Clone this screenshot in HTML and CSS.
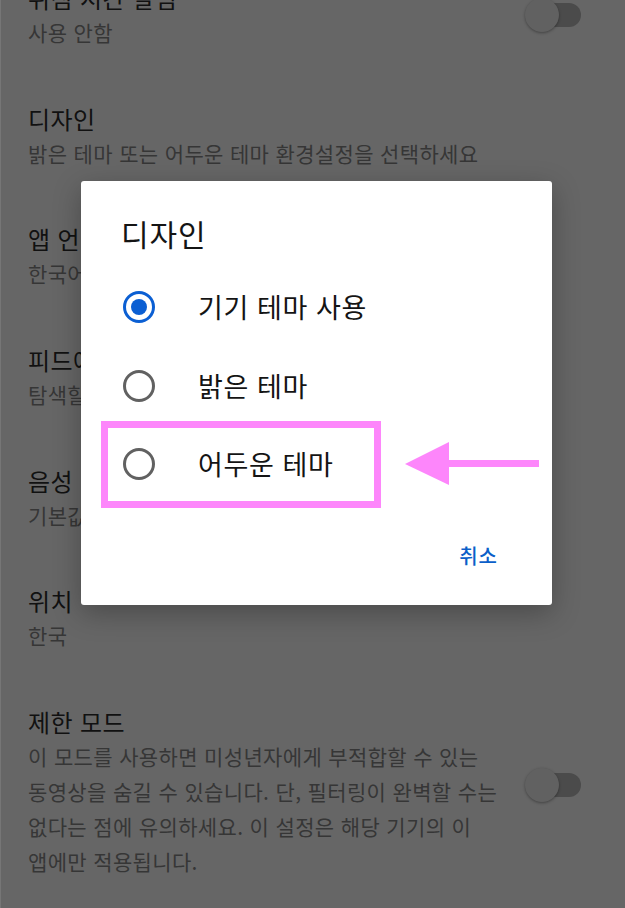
FILE: index.html
```html
<!DOCTYPE html>
<html lang="ko">
<head>
<meta charset="utf-8">
<title>설정</title>
<link rel="stylesheet" href="styles.css">
</head>
<body>
<main class="settings">
  <div class="row">
    <div class="row-text">
      <div class="row-title">취침 시간 알림</div>
      <div class="row-sub">사용 안함</div>
    </div>
    <div class="switch"></div>
  </div>
  <div class="row">
    <div class="row-text">
      <div class="row-title">디자인</div>
      <div class="row-sub">밝은 테마 또는 어두운 테마 환경설정을 선택하세요</div>
    </div>
  </div>
  <div class="row">
    <div class="row-text">
      <div class="row-title">앱 언어</div>
      <div class="row-sub">한국어</div>
    </div>
  </div>
  <div class="row">
    <div class="row-text">
      <div class="row-title">피드에서 재생</div>
      <div class="row-sub">탐색할 때 재생</div>
    </div>
  </div>
  <div class="row">
    <div class="row-text">
      <div class="row-title">음성 검색</div>
      <div class="row-sub">기본값</div>
    </div>
  </div>
  <div class="row">
    <div class="row-text">
      <div class="row-title">위치</div>
      <div class="row-sub">한국</div>
    </div>
  </div>
  <div class="row row-long">
    <div class="row-text">
      <div class="row-title">제한 모드</div>
      <div class="row-sub">이 모드를 사용하면 미성년자에게 부적합할 수 있는 동영상을 숨길 수 있습니다. 단, 필터링이 완벽할 수는 없다는 점에 유의하세요. 이 설정은 해당 기기의 이 앱에만 적용됩니다.</div>
    </div>
    <div class="switch switch-raised"></div>
  </div>
</main>

<div class="dialog" role="dialog" aria-labelledby="dlg-title">
  <h2 class="dialog-title" id="dlg-title">디자인</h2>
  <div class="options">
    <div class="option">
      <span class="radio radio-on"></span>
      <span class="option-label">기기 테마 사용</span>
    </div>
    <div class="option">
      <span class="radio"></span>
      <span class="option-label">밝은 테마</span>
    </div>
    <div class="option">
      <span class="radio"></span>
      <span class="option-label">어두운 테마</span>
    </div>
  </div>
  <div class="actions">
    <span class="btn-text">취소</span>
  </div>
</div>

<div class="mark-box"></div>
<svg class="mark-arrow" width="140" height="50" viewBox="0 0 140 50" aria-hidden="true">
  <polygon points="0,22 44,0 44,43" fill="#fd86fb"/>
  <rect x="43" y="18" width="91" height="7" fill="#fd86fb"/>
</svg>
</body>
</html>
```
FILE: styles.css
```css
html, body {
  margin: 0;
  padding: 0;
}

body {
  width: 625px;
  height: 908px;
  overflow: hidden;
  background: #666666;
  border-left: 1px solid #767676;
  box-sizing: border-box;
  font-family: "Noto Sans CJK KR", "Noto Sans", sans-serif;
  position: relative;
  word-break: keep-all;
}

/* settings list behind the scrim */
.settings {
  display: flex;
  flex-direction: column;
  margin-top: -45px;
}

.row {
  display: flex;
  align-items: center;
  padding: 25.3px 44px 25.3px 27px;
}

.row-text {
  flex: 1;
  min-width: 0;
  white-space: nowrap;
}

.row-title {
  font-size: 24px;
  letter-spacing: 0.4px;
  line-height: 35px;
  color: #111111;
}

.row-sub {
  font-size: 21px;
  letter-spacing: 0.35px;
  line-height: 35px;
  color: #363636;
}

.row-long .row-text {
  white-space: normal;
}

.row-long .row-sub {
  width: 490px;
}

.switch {
  position: relative;
  width: 56px;
  height: 34px;
  flex: none;
}

.switch::before {
  content: "";
  position: absolute;
  left: 14px;
  right: 0;
  top: 5px;
  height: 24px;
  border-radius: 12px;
  background: #4b4b4b;
}

.switch::after {
  content: "";
  position: absolute;
  left: 0;
  top: 0;
  width: 34px;
  height: 34px;
  border-radius: 50%;
  background: #616161;
  box-shadow: 0 1px 3px rgba(0, 0, 0, 0.35);
}

.switch-raised {
  margin-bottom: 12px;
}

/* modal dialog */
.dialog {
  position: absolute;
  left: 80px;
  top: 181px;
  width: 471px;
  height: 424px;
  box-sizing: border-box;
  background: #ffffff;
  border-radius: 3px;
  box-shadow: 0 8px 28px rgba(0, 0, 0, 0.28);
  padding: 34px 54px 28px 0;
  display: flex;
  flex-direction: column;
}

.dialog-title {
  margin: 0 0 17px 40px;
  font-size: 30px;
  letter-spacing: 0.9px;
  font-weight: 400;
  line-height: 36px;
  color: #141414;
}

.options {
  display: flex;
  flex-direction: column;
}

.option {
  display: flex;
  align-items: center;
  height: 78.5px;
  padding-left: 42px;
}

.radio {
  width: 32px;
  height: 32px;
  box-sizing: border-box;
  border: 3px solid #616161;
  border-radius: 50%;
  flex: none;
  display: flex;
  align-items: center;
  justify-content: center;
}

.radio-on {
  border-color: #0b5fd3;
}

.radio-on::after {
  content: "";
  width: 16px;
  height: 16px;
  border-radius: 50%;
  background: #0b5fd3;
}

.option-label {
  margin-left: 43px;
  font-size: 27px;
  letter-spacing: 0.6px;
  line-height: 36px;
  color: #141414;
}

.actions {
  margin-top: auto;
  display: flex;
  justify-content: flex-end;
  height: 44px;
  align-items: center;
}

.btn-text {
  font-size: 20px;
  letter-spacing: 1px;
  font-weight: 500;
  color: #0b5fc9;
}

/* highlight annotation drawn over the dialog */
.mark-box {
  position: absolute;
  left: 100px;
  top: 421px;
  width: 280px;
  height: 87px;
  box-sizing: border-box;
  border: 7px solid #fd86fb;
}

.mark-arrow {
  position: absolute;
  left: 404px;
  top: 442px;
}
```
